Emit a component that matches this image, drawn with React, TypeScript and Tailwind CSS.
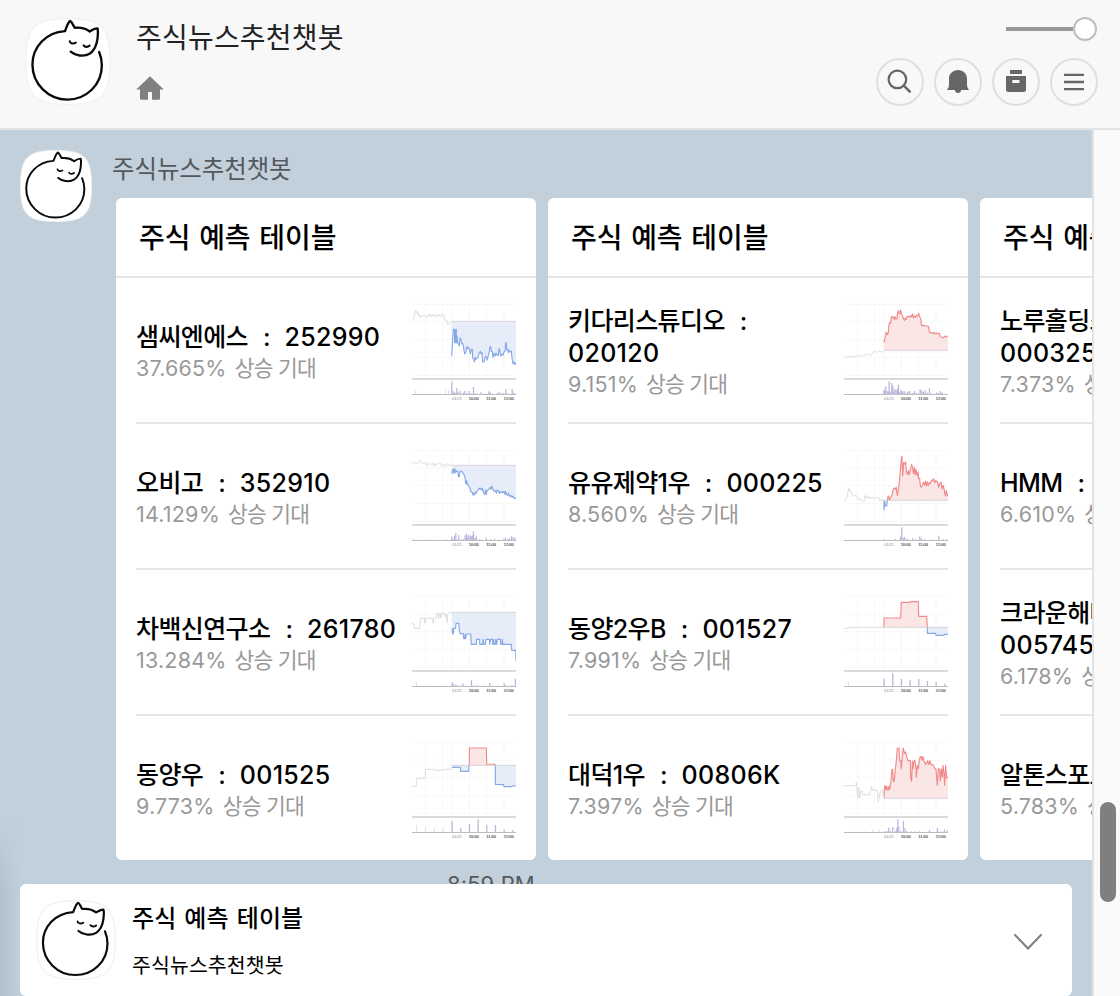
import React from "react";

type Seg = { tone: "up" | "down"; d: string };
type Chart = { prev: string; base: number; segs: Seg[]; vol: number[][]; oldVol?: number[][] };
type Item = { name: string; code: string; rate: string; wrap?: boolean; chart: Chart };

const hourly = (h: number[]) => h.map((v, i) => [156 + i * 26, v]);

const c1: Chart = {
  prev: "36,92 39,88 41,86 44,72 47,60 50,66 52,72 54,68 57,76 60,82 63,76 66,80 70,76 76,79 80,80 84,80 87,72 90,78 94,80 97,72 100,80 104,78 107,73 110,80 114,78 117,72 120,79 124,78 128,72 131,76 134,88 138,94 140,92 144,104 148,102 151,97 156,97",
  base: 94,
  segs: [{ tone: "down", d: "155,198 158,150 160,118 163,118 164,158 166,158 167,118 169,118 169,158 171,138 173,160 176,162 178,168 180,144 182,144 185,162 188,160 190,166 192,180 194,192 198,186 200,170 203,176 206,172 209,180 211,192 214,178 217,178 218,204 221,206 223,216 226,202 228,208 231,204 234,204 237,190 241,184 243,192 246,188 248,216 252,216 254,206 257,198 260,204 262,210 265,196 268,186 270,170 272,170 274,184 277,184 279,202 282,190 285,198 288,190 292,196 295,196 297,176 299,180 302,198 306,192 309,196 312,186 315,184 317,158 319,160 320,180 323,178 325,188 328,180 331,186 334,184 336,204 339,222 342,216 345,224 348,218" }],
  vol: [[155, 39], [158, 10], [162, 6], [165, 5], [170, 19], [173, 6], [179, 11], [183, 3], [190, 5], [194, 10], [200, 3], [207, 10], [213, 3], [220, 22], [225, 4], [233, 2], [242, 6], [249, 3], [258, 2], [266, 9], [270, 6], [277, 2], [290, 3], [297, 8], [304, 3], [309, 4], [317, 16], [323, 3], [336, 16], [339, 5], [344, 3]],
  oldVol: [[47, 11], [53, 3], [76, 3], [85, 2], [98, 3], [120, 3], [137, 14], [146, 12]],
};
const c2: Chart = {
  prev: "36,78 40,84 44,80 47,78 50,82 54,82 58,79 61,72 64,76 67,81 72,82 76,78 78,84 82,90 85,82 90,84 94,85 98,82 101,90 104,82 107,88 112,84 115,80 119,84 122,82 125,90 128,89 131,84 135,92 139,90 142,84 145,83 149,89 153,86 156,88",
  base: 88,
  segs: [{ tone: "down", d: "156,114 158,100 160,100 162,112 164,98 167,110 170,104 174,108 175,122 178,122 180,106 184,106 187,108 189,112 192,116 195,122 197,144 200,134 202,146 205,146 208,154 210,156 213,168 216,168 219,177 221,171 223,177 226,168 229,172 232,164 235,160 237,156 240,160 242,156 245,162 247,158 250,168 253,176 255,170 257,162 259,176 261,164 264,162 267,160 270,154 273,160 276,150 279,160 282,166 286,164 289,172 291,162 295,164 298,172 301,166 304,170 307,168 309,170 312,166 315,176 317,166 320,176 323,178 326,172 329,182 333,178 336,184 339,180 342,187 348,187" }],
  vol: [[155, 11], [158, 4], [163, 13], [167, 22], [171, 3], [176, 16], [183, 3], [190, 4], [195, 15], [199, 20], [203, 11], [206, 17], [210, 12], [213, 14], [217, 15], [220, 27], [225, 8], [229, 12], [239, 4], [249, 2], [258, 8], [264, 2], [272, 4], [283, 5], [296, 2], [311, 5], [316, 8], [323, 4], [328, 6], [334, 12], [339, 10], [345, 8]],
  oldVol: [[38, 4], [44, 3], [57, 2], [72, 3], [87, 4], [113, 3], [142, 4]],
};
const c3: Chart = {
  prev: "36,125 40,124 42,128 44,139 59,139 61,109 73,109 75,124 77,109 97,109 100,124 102,109 108,109 110,94 114,94 116,109 118,94 120,94 122,94 123,109 125,94 134,94 135,104 137,94 141,122 143,97 146,92 156,92",
  base: 91,
  segs: [{ tone: "down", d: "156,138 158,156 160,156 161,139 167,139 168,124 177,124 177,140 180,155 190,155 191,170 194,170 195,158 197,170 199,156 212,156 213,171 214,187 229,187 230,172 239,172 239,187 248,187 249,172 252,187 256,187 258,172 265,172 268,172 269,187 272,172 277,172 278,187 280,172 282,187 286,187 287,172 290,187 292,172 301,172 302,187 306,187 307,172 309,187 334,187 335,205 347,205 348,237" }],
  vol: [[156, 13], [160, 6], [166, 5], [171, 4], [182, 2], [189, 8], [199, 2], [214, 18], [220, 3], [231, 3], [249, 3], [269, 10], [277, 2], [293, 2], [312, 9], [316, 3], [335, 4], [346, 23]],
  oldVol: [[49, 13], [56, 3], [73, 3], [110, 2], [139, 3], [150, 4]],
};
const c4: Chart = {
  prev: "36,175 50,175 50,151 76,151 76,124 102,124 103,127 128,127 129,124 154,124 155,116",
  base: 112,
  segs: [
    { tone: "down", d: "156,118 181,118 182,130 206,130 207,112" },
    { tone: "up", d: "208,112 208,60 259,60 260,108 285,109 286,112" },
    { tone: "down", d: "286,112 286,169 311,170 312,176 336,176 338,174 348,174" },
  ],
  vol: hourly([35, 13, 25, 39, 23, 22, 9, 7]),
  oldVol: [[50, 22], [76, 17], [103, 15], [129, 14]],
};
const c5: Chart = {
  prev: "36,202 40,201 44,200 47,203 51,198 55,200 59,198 63,204 68,200 73,199 78,195 83,200 87,200 91,196 96,198 101,194 106,192 111,194 115,198 120,192 125,185 130,183 135,188 139,184 144,183 148,187 152,186 156,182",
  base: 181,
  segs: [{ tone: "up", d: "156,158 160,138 163,126 166,134 169,128 171,102 174,98 176,100 178,80 181,84 184,80 187,88 190,80 192,87 195,86 197,66 200,62 202,72 205,70 206,60 208,72 211,76 214,84 217,92 220,84 223,88 226,78 230,80 233,82 236,76 239,80 242,72 244,84 248,78 251,82 254,76 257,78 260,70 262,78 265,84 267,92 268,104 272,108 276,106 280,108 284,108 287,108 290,110 292,126 296,128 300,128 304,131 307,127 311,132 315,129 319,131 322,130 325,140 330,142 334,143 338,138 341,142 345,139 348,138" }],
  vol: [[155, 12], [158, 14], [161, 24], [165, 10], [168, 7], [171, 39], [174, 8], [179, 34], [182, 25], [185, 8], [188, 16], [192, 12], [196, 18], [199, 29], [203, 8], [207, 14], [211, 9], [216, 10], [222, 5], [227, 9], [233, 10], [241, 4], [247, 10], [252, 4], [259, 3], [264, 15], [269, 12], [274, 7], [279, 12], [285, 5], [292, 18], [298, 3], [305, 2], [314, 5], [319, 3], [324, 10], [330, 6], [340, 2]],
};
const c6: Chart = {
  prev: "36,196 40,194 43,187 46,178 50,156 52,166 54,160 57,166 60,176 64,182 69,177 74,179 76,190 81,189 86,189 89,196 94,195 97,194 99,178 102,186 105,182 109,187 112,182 116,188 120,184 124,186 129,184 133,188 137,184 142,187 145,196 149,189 153,195 156,192",
  base: 193,
  segs: [
    { tone: "down", d: "156,193 156,222 158,198 160,210 162,208 164,210 166,194" },
    { tone: "up", d: "166,193 168,181 170,180 172,193 174,190 177,182 180,178 182,166 186,156 190,160 193,154 196,178 200,156 203,128 206,90 209,62 210,62 212,120 215,80 218,84 221,78 223,106 226,116 229,104 232,116 236,98 239,86 242,96 244,112 247,94 249,116 252,100 255,118 258,108 260,128 263,128 265,150 268,154 271,148 275,138 278,148 281,136 284,150 287,138 290,148 293,140 296,142 299,132 302,134 305,128 308,140 311,134 314,136 316,136 320,154 323,144 327,138 330,158 334,148 337,164 340,180 343,164 346,180 348,174" },
  ],
  vol: [[156, 4], [170, 2], [190, 4], [205, 11], [209, 39], [213, 7], [217, 10], [224, 5], [230, 3], [242, 6], [250, 3], [263, 12], [268, 6], [279, 3], [292, 2], [302, 3], [320, 14], [333, 4], [344, 3]],
};
const c7: Chart = {
  prev: "36,139 50,139 51,136 156,136",
  base: 136,
  segs: [
    { tone: "up", d: "156,136 156,108 206,108 208,61 235,61 236,59 259,59 260,103 284,103 286,136" },
    { tone: "down", d: "286,136 286,154 311,154 312,160 336,160 338,157 348,157" },
  ],
  vol: hourly([23, 39, 22, 19, 22, 16, 14, 8]),
  oldVol: [[50, 15]],
};
const c8: Chart = {
  prev: "36,173 71,173 73,162 77,212 80,178 83,210 86,190 90,188 93,200 113,200 116,190 118,174 121,186 125,186 136,187 139,222 143,197 147,188 151,186 156,210",
  base: 211,
  segs: [{ tone: "up", d: "156,210 158,174 160,174 162,186 164,174 167,186 169,186 171,174 173,184 175,172 177,160 180,124 182,124 184,160 186,160 188,148 190,124 193,98 196,60 201,60 203,98 206,98 208,122 211,85 214,60 217,76 221,72 224,86 228,98 235,98 236,148 239,160 241,100 243,122 246,98 249,98 252,122 253,148 256,112 259,122 262,98 265,86 268,86 270,97 273,86 276,98 281,110 287,98 291,110 294,98 297,110 303,110 309,122 312,124 314,148 316,172 319,122 323,124 325,158 328,123 331,148 333,112 336,136 338,172 341,112 344,150 348,148" }],
  vol: [[156, 3], [164, 4], [170, 14], [175, 4], [182, 16], [188, 3], [193, 12], [197, 39], [200, 18], [206, 4], [214, 35], [219, 12], [225, 3], [237, 3], [249, 3], [261, 3], [274, 2], [292, 7], [316, 13], [329, 3], [337, 9], [345, 6]],
  oldVol: [[73, 3], [97, 4], [122, 9], [141, 11]],
};

const tables: Item[][] = [
  [
    { name: "샘씨엔에스", code: "252990", rate: "37.665%", chart: c1 },
    { name: "오비고", code: "352910", rate: "14.129%", chart: c2 },
    { name: "차백신연구소", code: "261780", rate: "13.284%", chart: c3 },
    { name: "동양우", code: "001525", rate: "9.773%", chart: c4 },
  ],
  [
    { name: "키다리스튜디오", code: "020120", rate: "9.151%", wrap: true, chart: c5 },
    { name: "유유제약1우", code: "000225", rate: "8.560%", chart: c6 },
    { name: "동양2우B", code: "001527", rate: "7.991%", chart: c7 },
    { name: "대덕1우", code: "00806K", rate: "7.397%", chart: c8 },
  ],
  [
    { name: "노루홀딩스우", code: "000325", rate: "7.373%", wrap: true, chart: c5 },
    { name: "HMM", code: "011200", rate: "6.610%", chart: c6 },
    { name: "크라운해태홀딩스우", code: "005745", rate: "6.178%", wrap: true, chart: c7 },
    { name: "알톤스포츠", code: "123750", rate: "5.783%", chart: c8 },
  ],
];

function StockChart({ chart }: { chart: Chart }) {
  return (
    <svg viewBox="36 24 312 312" className="size-[104px] shrink-0">
      <g stroke="#f5f5f5" strokeWidth="2.5">
        {[43, 96, 149, 202, 256].map((y) => <line key={y} x1="36" x2="348" y1={y} y2={y} />)}
        {[77, 128, 156, 208, 260, 312].map((x) => <line key={x} x1={x} x2={x} y1="43" y2="264" />)}
      </g>
      {chart.segs.map((s, i) => {
        const pts = s.d.split(" ");
        const x0 = pts[0].split(",")[0];
        const x1 = pts[pts.length - 1].split(",")[0];
        const up = s.tone === "up";
        return (
          <g key={i}>
            <polygon points={`${x0},${chart.base} ${s.d} ${x1},${chart.base}`} fill={up ? "#fbe6e6" : "#e6edf8"} />
            <polyline points={s.d} fill="none" stroke={up ? "#f08a8a" : "#86a8e4"} strokeWidth="3.4" strokeLinejoin="round" />
          </g>
        );
      })}
      <line x1="156" x2="348" y1={chart.base} y2={chart.base} stroke="#cfcfd2" strokeWidth="2.5" />
      <polyline points={chart.prev} fill="none" stroke="#dadada" strokeWidth="2.8" strokeLinejoin="round" />
      <rect x="36" y="264" width="312" height="6" fill="#dadada" />
      {(chart.oldVol ?? []).map(([x, h], i) => <rect key={i} x={x - 1.5} y={313 - h} width="3" height={h} fill="#dfdfdf" />)}
      {chart.vol.map(([x, h], i) => <rect key={i} x={x - 1.5} y={313 - h} width="3.8" height={h} fill="#bcb4dc" />)}
      <rect x="36" y="312" width="312" height="3" fill="#bdbdbd" />
      <g fontSize="12" fontFamily="Liberation Sans, sans-serif" fill="#444">
        <text x="156" y="331" fill="#888">01/21</text>
        <text x="206" y="331" stroke="#555" strokeWidth=".4">10:00</text>
        <text x="259" y="331" stroke="#555" strokeWidth=".4">11:00</text>
        <text x="311" y="331" stroke="#555" strokeWidth=".4">12:00</text>
      </g>
    </svg>
  );
}

function CatAvatar({ className, edge }: { className: string; edge: string }) {
  return (
    <svg viewBox="77 56 254 258" className={className} preserveAspectRatio="none">
      <path d="M79 185C79 82 104 58 204 58S329 82 329 185S304 312 204 312S79 288 79 185Z" fill="#fff" stroke={edge} strokeWidth="3.5" />
      <g fill="none" stroke="#0a0a0a" strokeWidth="7" strokeLinecap="round" strokeLinejoin="round">
        <path d="M296 157C301 169 304 182 304 196C304 254 258 298 202 298S99 252 99 194C99 143 138 98 195 95C200 84 203 70 210 65C216 66 218 77 224 85C240 83 254 85 268 96C276 91 284 86 291 87C294 95 292 106 291 118C288 140 281 153 269 161C250 173 224 167 212 156" />
        <path d="M209 125C211 132 220 134 227 129M250 137C254 143 262 143 268 138" strokeWidth="6" />
      </g>
    </svg>
  );
}

function RoundButton({ children }: { children: React.ReactNode }) {
  return (
    <button className="size-12 rounded-full border-2 border-[#dfdfdf] text-[#666]">
      <svg viewBox="2 2 44 44" className="size-11">{children}</svg>
    </button>
  );
}

function StockRow({ item, last }: { item: Item; last: boolean }) {
  return (
    <li className={"mx-5 flex items-center justify-between " + (last ? "h-36" : "h-[146px] border-b-2 border-[#e6e6e6]")}>
      <div className="pt-1 whitespace-nowrap">
        <p className="text-[25px] leading-8 font-medium text-black">
          <span className="tracking-[-0.6px]">{item.name}</span>
          <span className="mr-[14px] ml-[15px]">:</span>
          {item.wrap && <br />}
          <span className="tracking-[0.3px]">{item.code}</span>
        </p>
        <p className="text-[21.5px] leading-[30px] text-[#999]">
          <span className="mr-[2px] tracking-[0.2px]">{item.rate}</span> <span className="tracking-[-0.8px]">상승 기대</span>
        </p>
      </div>
      <StockChart chart={item.chart} />
    </li>
  );
}

export default function App() {
  return (
    <div className="flex h-[996px] w-[1120px] flex-col overflow-hidden bg-[#f8f8f8] font-['Inter','Noto_Sans_CJK_KR',sans-serif]">
      <header className="flex h-[130px] shrink-0 justify-between border-b-2 border-[#e3e3e3] pr-[22px] pl-[25px]">
        <div className="flex">
          <CatAvatar className="mt-[18px] h-[87px] w-[86px]" edge="#f0f0f0" />
          <div className="pt-[18px] pl-[25px]">
            <h1 className="text-[28px] leading-10 tracking-[0.2px] text-[#222]">주식뉴스추천챗봇</h1>
            <svg viewBox="0 0 28 24" className="mt-[18px] h-6 w-7 fill-[#808080]">
              <path d="M14 .3 27.8 13.6H24V22.5Q24 23.8 22.7 23.8H16V16H12V23.8H5.3Q4 23.8 4 22.5V13.6H.2Z" />
            </svg>
          </div>
        </div>
        <div className="flex flex-col items-end pt-[17px]">
          <div className="flex items-center pr-px">
            <div className="h-1 w-[67px] bg-[#999]" />
            <div className="size-6 rounded-full border-2 border-[#bfbfbf] bg-white" />
          </div>
          <div className="mt-[17px] flex gap-[10px]">
            <RoundButton>
              <circle cx="21.4" cy="21.4" r="8.8" fill="none" stroke="currentColor" strokeWidth="2.2" />
              <path d="m27.8 27.6 6 6" stroke="currentColor" strokeWidth="2.6" strokeLinecap="round" />
            </RoundButton>
            <RoundButton>
              <path fill="currentColor" d="M24 12C29 12 33 15.6 33 20.5V26.5C33 29 34 30.5 35 32H27.2C27 34 25.7 35 24 35S21 34 20.8 32H13C14 30.5 15 29 15 26.5V20.5C15 15.6 19 12 24 12Z" />
            </RoundButton>
            <RoundButton>
              <path fill="currentColor" fillRule="evenodd" d="M18 12H30V16H18ZM14 18H34V31.5Q34 34 31.5 34H16.5Q14 34 14 31.5ZM20.3 22V25H27.4V22Z" />
            </RoundButton>
            <RoundButton>
              <path stroke="currentColor" strokeWidth="2.3" d="M14 16.8H34M14 24H34M14 31.2H34" />
            </RoundButton>
          </div>
        </div>
      </header>

      <div className="flex min-h-0 flex-1">
        <main className="relative w-[1094px] overflow-hidden border-r-2 border-[#e3e3e3] bg-[#c2d0db]">
          <div className="absolute bottom-0 left-0 h-[176px] w-5 bg-linear-to-r from-[#a9b7c3]/60 to-transparent mask-t-from-60%" />
          <div className="flex pt-5 pl-5">
            <CatAvatar className="size-[72px] shrink-0" edge="#f1f3f5" />
            <div className="pl-5">
              <h2 className="h-12 pt-px text-[24.5px] leading-9 tracking-[-0.1px] text-[#54595e]">주식뉴스추천챗봇</h2>
              <div className="ml-1 flex gap-3">
                {tables.map((rows, i) => (
                  <section key={i} className="h-[662px] w-[420px] shrink-0 overflow-hidden rounded-md bg-white">
                    <h3 className="h-20 border-b-2 border-[#e6e6e6] pl-[23px] text-[28px] leading-[81px] font-medium tracking-[-0.1px] text-black [word-spacing:1.5px]">주식 예측 테이블</h3>
                    <ul>
                      {rows.map((item, j) => <StockRow key={item.code} item={item} last={j === 3} />)}
                    </ul>
                  </section>
                ))}
              </div>
              <p className="mt-2 ml-[335px] text-[22px] leading-8 tracking-[0.1px] text-[#555a5e]">8:59 PM</p>
            </div>
          </div>
          <aside className="absolute bottom-0 left-5 flex h-28 w-[1052px] rounded-md bg-white pt-4 pl-4">
            <CatAvatar className="h-20 w-20 shrink-0" edge="#f0f0f0" />
            <div className="flex-1 pt-px pl-4 text-black">
              <p className="text-[24px] leading-9 font-medium tracking-[0.1px] [word-spacing:1.5px]">주식 예측 테이블</p>
              <p className="mt-3 text-[20.5px] leading-[34px] tracking-[0.1px]">주식뉴스추천챗봇</p>
            </div>
            <svg viewBox="0 0 28 16" className="mt-[34px] mr-[30px] h-4 w-7 fill-none stroke-[#7d7d7d] stroke-2">
              <path d="M1 1 14 14.5 27 1" strokeLinecap="round" />
            </svg>
          </aside>
        </main>
        <div className="flex-1 bg-[#fafafa] pt-[672px] pl-1.5">
          <div className="h-[100px] w-4 rounded-full bg-[#7f7f7f]" />
        </div>
      </div>
    </div>
  );
}
